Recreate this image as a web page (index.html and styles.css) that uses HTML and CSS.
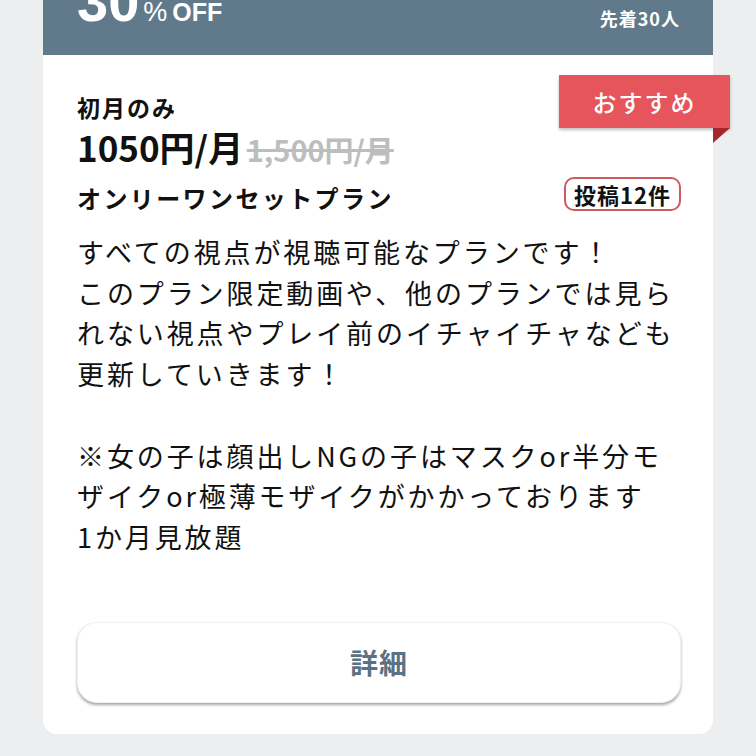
FILE: index.html
```html
<!DOCTYPE html>
<html lang="ja">
<head>
    <meta charset="UTF-8">
    <meta name="viewport" content="width=device-width, initial-scale=1.0">
    <title>プラン詳細</title>
    <link rel="stylesheet" href="styles.css">
</head>
<body>
    <div class="plan-card">
        <div class="plan-header">
            <div class="off">
                <span class="off-num">30</span><span class="off-pct">%</span><span class="off-unit">OFF</span>
            </div>
            <div class="limit">先着30人</div>
        </div>

        <div class="plan-body">
            <div class="ribbon">おすすめ</div>

            <p class="lead">初月のみ</p>
            <div class="price">
                <span class="price-now">1050円/月</span>
                <span class="price-old">1,500円/月</span>
            </div>
            <div class="plan-title-row">
                <h2 class="plan-title">オンリーワンセットプラン</h2>
                <span class="post-count">投稿12件</span>
            </div>

            <p class="plan-desc">すべての視点が視聴可能なプランです！<br>このプラン限定動画や、他のプランでは見ら<br>れない視点やプレイ前のイチャイチャなども<br>更新していきます！<br><br>※女の子は顔出しNGの子はマスクor半分モ<br>ザイクor極薄モザイクがかかっております<br>1か月見放題</p>

            <button class="detail-btn">詳細</button>
        </div>
    </div>
</body>
</html>
```

FILE: styles.css
```css
* {
    margin: 0;
    padding: 0;
    box-sizing: border-box;
}

body {
    font-family: "Noto Sans CJK JP", "Noto Sans", sans-serif;
    background-color: #eceef0;
    color: #111;
}

.plan-card {
    width: 670px;
    margin: -55px auto 0;
}

.plan-header {
    height: 110px;
    background: #617a8b;
    color: #fff;
    display: flex;
    justify-content: space-between;
    align-items: flex-end;
    padding: 0 33px 25px 34px;
}

.off {
    font-family: "Liberation Sans", Arial, sans-serif;
    font-weight: bold;
    font-size: 56px;
    line-height: 1;
}

.off-pct {
    font-size: 27px;
    font-weight: normal;
    margin-left: 4px;
}

.off-unit {
    font-size: 25px;
    margin-left: 5px;
}

.limit {
    font-size: 18px;
    font-weight: bold;
    line-height: 1;
    letter-spacing: 1px;
    margin-bottom: 3px;
}

/* body */
.plan-body {
    position: relative;
    background: #fff;
    border-radius: 0 0 14px 14px;
    padding: 37px 32px 31px 34px;
}

.ribbon {
    position: absolute;
    top: 20px;
    right: -17px;
    width: 171px;
    height: 53px;
    background: #e5555b;
    color: #fff;
    font-size: 24px;
    font-weight: 500;
    letter-spacing: 2px;
    line-height: 53px;
    text-align: center;
    box-shadow: 0 2px 3px rgba(0, 0, 0, 0.25);
}

.ribbon::after {
    content: "";
    position: absolute;
    right: 0;
    bottom: -15px;
    border-top: 15px solid #a5272d;
    border-right: 17px solid transparent;
}

.lead {
    font-size: 23px;
    font-weight: bold;
    line-height: 30px;
    letter-spacing: 2px;
}

.price {
    margin-top: 3px;
    height: 44px;
    line-height: 44px;
    white-space: nowrap;
}

.price-now {
    font-size: 35px;
    font-weight: bold;
}

.price-old {
    font-size: 29px;
    font-weight: bold;
    color: #bdbdbd;
    text-decoration: line-through;
    text-decoration-thickness: 3px;
}

.plan-title-row {
    display: flex;
    justify-content: space-between;
    align-items: flex-end;
    margin-top: 8px;
}

.plan-title {
    font-size: 24px;
    font-weight: bold;
    line-height: 28px;
    letter-spacing: 2.4px;
}

.post-count {
    height: 34px;
    margin-bottom: 1px;
    padding: 0 8px;
    border: 2px solid #cf5a5e;
    border-radius: 10px;
    font-size: 22px;
    font-weight: bold;
    line-height: 30px;
    letter-spacing: 1px;
}

.plan-desc {
    margin-top: 20px;
    font-size: 27px;
    line-height: 40.7px;
    letter-spacing: 2.9px;
    white-space: nowrap;
}

.detail-btn {
    display: block;
    width: 100%;
    height: 81px;
    margin-top: 64px;
    background: #fff;
    border: 1px solid #f0f0f0;
    border-radius: 20px;
    box-shadow: 0 2px 3px rgba(0, 0, 0, 0.35);
    font-family: inherit;
    font-size: 28px;
    font-weight: bold;
    letter-spacing: 1px;
    color: #5b7282;
    cursor: pointer;
}
```
